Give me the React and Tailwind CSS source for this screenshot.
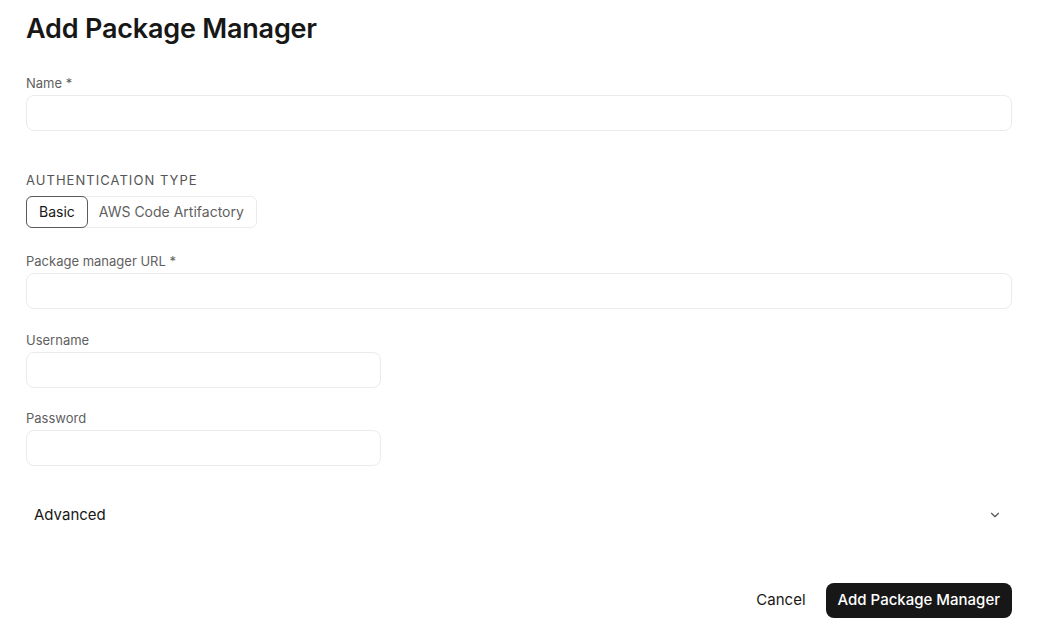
import { useState } from "react";

function Field({ label, className = "" }) {
  return (
    <div className={className}>
      <label className="block text-[13px] leading-4 text-[#5f5f5f] mb-[4px]">{label}</label>
      <input
        type="text"
        className="w-full h-[36px] rounded-lg border border-[#ebebeb] bg-white px-3 text-sm outline-none"
      />
    </div>
  );
}

export default function App() {
  const [auth, setAuth] = useState("basic");

  return (
    <div className="min-h-screen bg-white text-[#171717] font-['Inter',sans-serif] pl-[26px] pr-[25px] pt-[13px]">
      <h1 className="text-[27px] leading-8 font-semibold tracking-[-0.2px]">Add Package Manager</h1>

      <Field label="Name *" className="mt-[30px]" />

      <div className="mt-[41px]">
        <div className="text-[13px] leading-4 uppercase tracking-[0.08em] text-[#555]">Authentication type</div>
        <div className="mt-[8px] inline-flex rounded-md border border-[#ebebeb] text-sm">
          <button
            onClick={() => setAuth("basic")}
            className={
              auth === "basic"
                ? "h-[32px] px-3 rounded-md border border-[#5a5a5a] -m-px text-[#171717]"
                : "h-[30px] px-3 text-[#5f5f5f]"
            }
          >
            Basic
          </button>
          <button
            onClick={() => setAuth("aws")}
            className={
              auth === "aws"
                ? "h-[32px] px-3 rounded-md border border-[#5a5a5a] -m-px text-[#171717]"
                : "h-[30px] px-3 text-[#5f5f5f]"
            }
          >
            AWS Code Artifactory
          </button>
        </div>
      </div>

      <Field label="Package manager URL *" className="mt-[25px]" />
      <Field label="Username" className="mt-[23px] w-[355px]" />
      <Field label="Password" className="mt-[22px] w-[355px]" />

      <button className="mt-[30px] w-full flex items-center justify-between pl-[8px] pr-[10px] py-2 text-[15px]">
        <span>Advanced</span>
        <svg width="14" height="14" viewBox="0 0 24 24" fill="none" stroke="#555" strokeWidth="2" strokeLinecap="round" strokeLinejoin="round">
          <path d="m6 9 6 6 6-6" />
        </svg>
      </button>

      <div className="mt-[48px] flex justify-end items-center gap-4">
        <button className="px-1 text-[15px] text-[#171717]">Cancel</button>
        <button className="h-[35px] px-3 rounded-lg bg-[#171717] text-white text-[15px] font-medium">
          Add Package Manager
        </button>
      </div>
    </div>
  );
}
